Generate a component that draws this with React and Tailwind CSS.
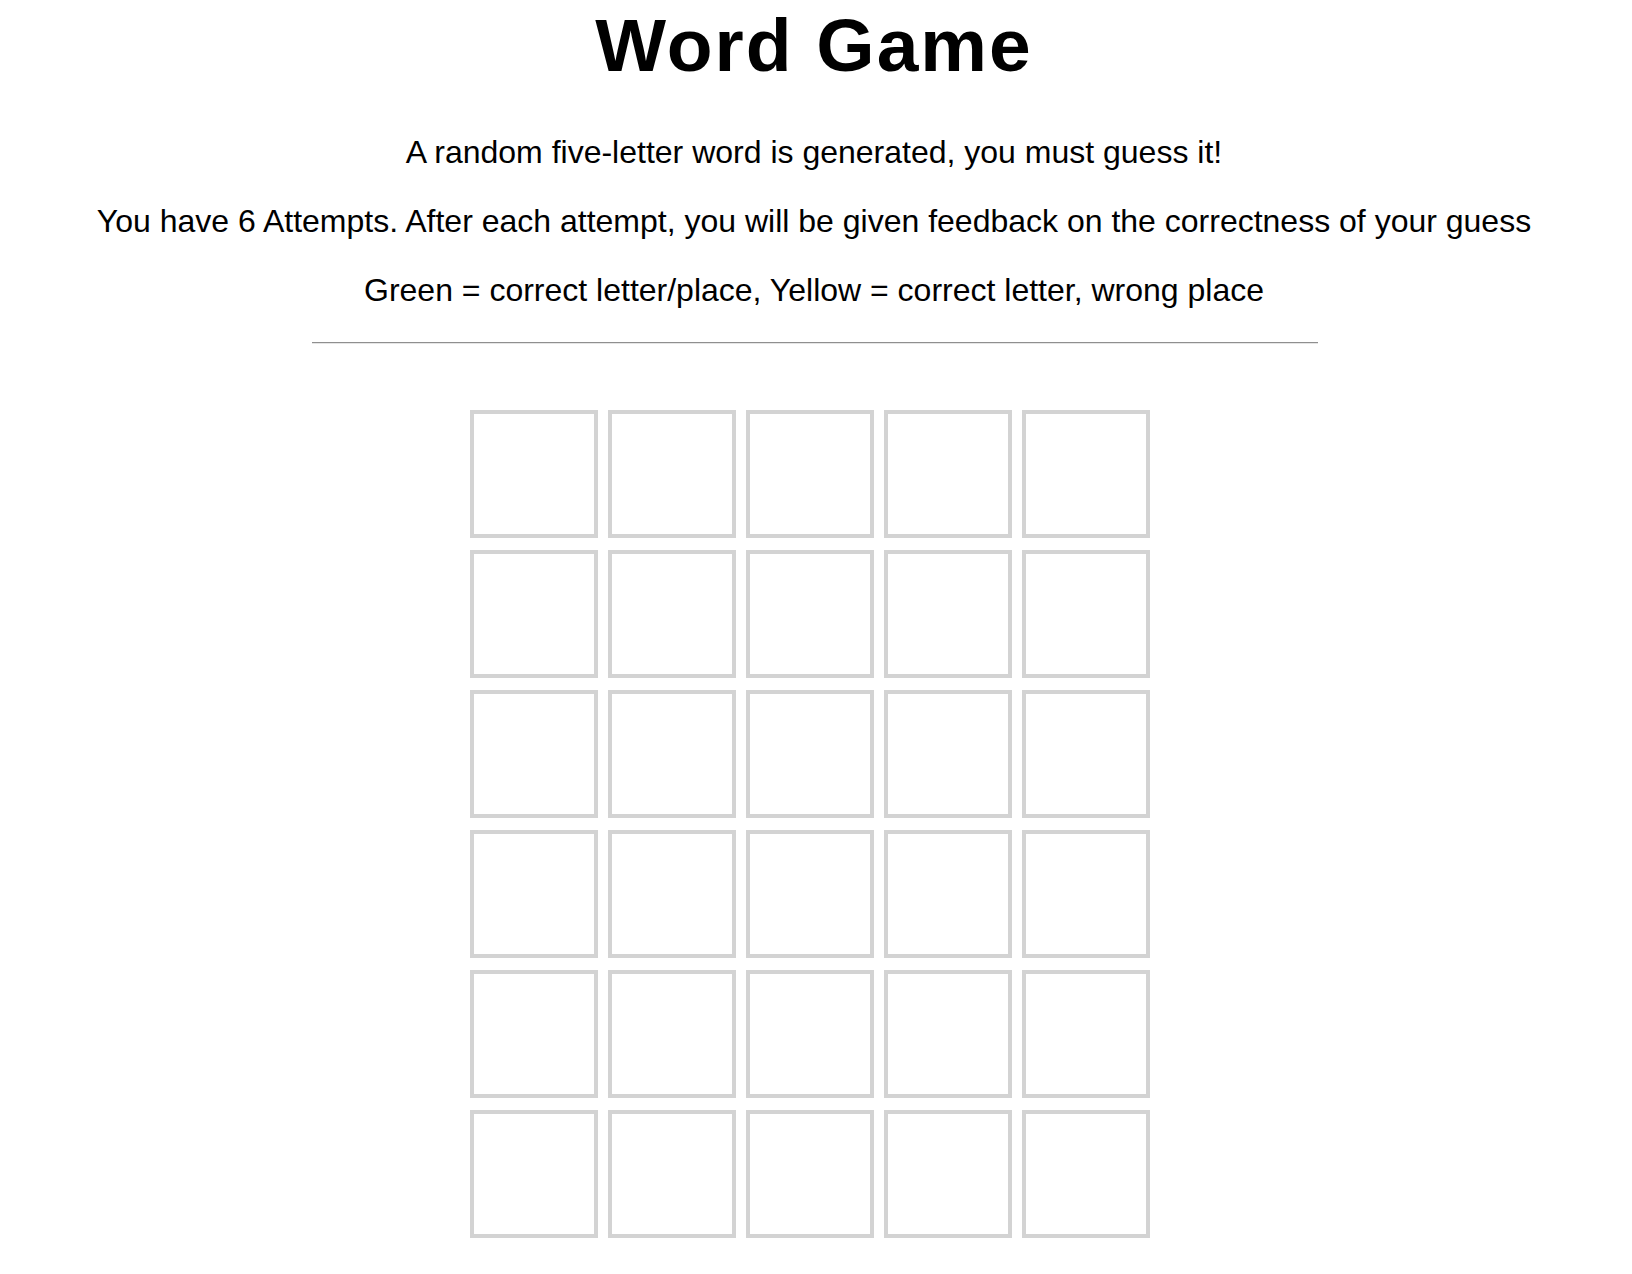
const ROWS = 6;
const COLS = 5;

export default function App() {
  return (
    <div className="min-h-screen bg-white text-black font-['Liberation_Sans',Arial,sans-serif] flex flex-col items-center">
      <h1 className="mt-[3px] mr-[4px] text-[75px] font-bold leading-[84px] tracking-[2px]">Word Game</h1>

      <div className="mt-[47px] mr-[4px] flex flex-col items-center gap-[32px] text-[32px] leading-[37px]">
        <p>A random five-letter word is generated, you must guess it!</p>
        <p>You have 6 Attempts. After each attempt, you will be given feedback on the correctness of your guess</p>
        <p>Green = correct letter/place, Yellow = correct letter, wrong place</p>
      </div>

      <div className="mt-[33px] w-[1006px] mr-[3px] border-t border-t-[#8f8f8f] border-b border-b-[#e5e5e5]" />

      <div className="mt-[66px] mr-[13px] grid grid-cols-5 gap-x-[10px] gap-y-[12px]">
        {Array.from({ length: ROWS * COLS }).map((_, i) => (
          <div key={i} className="w-[128px] h-[128px] border-4 border-[#d3d3d3]" />
        ))}
      </div>
    </div>
  );
}
